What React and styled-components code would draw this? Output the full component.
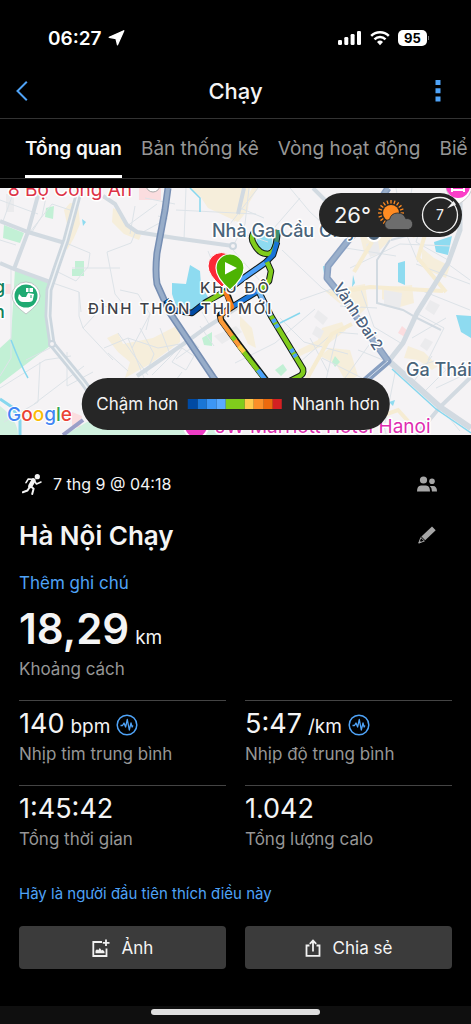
import React, { useState } from "react";
import styled, { createGlobalStyle } from "styled-components";

const tabs = ["Tổng quan", "Bản thống kê", "Vòng hoạt động", "Biể"];

const metrics = [
  { value: "140", unit: "bpm", label: "Nhịp tim trung bình", chart: true },
  { value: "5:47", unit: "/km", label: "Nhịp độ trung bình", chart: true },
  { value: "1:45:42", label: "Tổng thời gian" },
  { value: "1.042", label: "Tổng lượng calo" },
];

const paceColors = [
  { color: "#004aa3", size: 1 },
  { color: "#1a76d6", size: 1 },
  { color: "#3c96f5", size: 1 },
  { color: "#5aaaff", size: 1 },
  { color: "#80cc1c", size: 2 },
  { color: "#ffca4c", size: 1 },
  { color: "#fb8f28", size: 1 },
  { color: "#ec690d", size: 1 },
  { color: "#d42022", size: 1 },
];

function StatusIcons() {
  return (
    <StatusGroup>
      <svg width="24" height="16" viewBox="0 0 24 16" fill="#fff">
        <rect x="0" y="10" width="4" height="5" rx="1.3" />
        <rect x="6.3" y="7" width="4" height="8" rx="1.3" />
        <rect x="12.6" y="4" width="4" height="11" rx="1.3" />
        <rect x="19" y="1" width="4" height="14" rx="1.3" />
      </svg>
      <svg width="20" height="16" viewBox="0 0 20 16" fill="none" stroke="#fff" strokeWidth="2.5">
        <path d="M1.2 5.8a12.6 12.6 0 0 1 17.6 0" />
        <path d="M4.5 9.3a7.8 7.8 0 0 1 11 0" />
        <path d="M10 15.2l-3-3.2a4.3 4.3 0 0 1 6 0z" fill="#fff" stroke="none" />
      </svg>
      <Battery>95</Battery>
    </StatusGroup>
  );
}

function MapDrawing() {
  return (
    <MapSvg viewBox="0 0 471 247" preserveAspectRatio="xMidYMid slice">
      <rect width="471" height="247" fill="#f5f3f5" />

      {/* built-up blocks */}
      <g fill="#f6eedb">
        <path d="M190 0h60l-2 22-10 12-13-6-17-8-8-12z" />
        <path d="M70 15l8 1 2 20-6 14-7 12-4-10 4-16-3-14z" />
        <path d="M113 20l8 4 8 15 12 8-2 5-15-6-12-12z" />
        <path d="M107 150l11-5 5 11 30-6 27-14v18l-30 22-25 14 5-16-12-10z" />
        <path d="M252 0h6l-12 20-12 14-2-6 12-12zM360 48l26-14 8 14-20 20-10-4zM405 36l20-8 12 4-6 12-18 6z" />
        <path d="M325 103l40-7 3 22-10 10-20-14zM382 100l30-3 2 18-14 4-18-8z" />
        <path d="M322 140l20-6 4 8-18 14-24 10-14 8 8-12 20-10zM422 60l12 10 16 8-4 12-14-6-10-12z" />
        <path d="M330 160l20 2 8 26-12 6-10-18-16-8zM408 158l16 6 14 14-6 4-14-10-14-2zM240 128l12 12 4 20-8-4-8-18z" />
      </g>
      <g fill="#ebebed">
        <path d="M6 6h8v18h-8zM318 122l10 8-5 7-9-8zM316 138l8 5-4 8-8-5zM384 102l18 3-2 17-16-4zM430 112l10 5-6 10-9-6zM425 150l8 4-6 9-7-5zM366 56l12-3 2 12-10 4zM214 148l22-10 6 6-20 12z" />
      </g>
      <g fill="#fbdddf">
        <path d="M139 0h22v12h-22zM402 138l6 5-3 6-7-4zM72 224l10 4-2 12-8-2zM5 96h6v10H5z" />
      </g>
      <g fill="#c2f0d5">
        <path d="M15 81l35 13-4 24 4 40-50 38v-36l11-10z" />
        <path d="M4 37l20 8-4 10-17-5zM46 20l8-2-1 13-8-2zM75 73h9v15H72v-7h3z" />
        <path d="M202 150l10-6v14l-8-1zM275 182l8-6 4 6-6 6zM335 168l5 6-5 5-3-5z" />
        <path d="M0 218q18 14 18 29H0zM65 247l22-13 130-6 4 19z" opacity="0.7" />
      </g>
      <g fill="#8edbf0">
        <path d="M172 95l14 1 4-19 10 6 1 14 7 12-14 14-18-5-4-12z" />
        <path d="M82 31l4 3-3 4zM434 54l18-6-4 19-12-3zM398 75l7-2v24l-7-3zM456 127l15 1v22l-10-6zM353 87l2 8-3 4z" />
        <path d="M257 48l14-6 2 16-9 8-8-9zM389 214l6-2-2 6z" />
      </g>

      {/* side streets */}
      <g fill="none" stroke="#dde3e8" strokeWidth="1">
        <path d="M0 12l38 14M15 0L2 36M48 0l-6 28-10 16M0 52l16 5M30 44l22-28 24 8M66 55l24 10-2 14-12 14-24-12" />
        <path d="M50 94l29 10v24l4 12 30 32M79 104l2 20M72 80h48M107 64l8 42 8 10M107 64l24-9 4-10" />
        <path d="M176 22l80 4M143 44l22-12M135 18l-5 28M145 10l30 6M186 0l-2 52M158 28l10 3M127 38l30-22" />
        <path d="M120 102l18 4 12 20-4 16M83 140l20-22 22 4M104 160l24-10 30 10 22-4M140 140l14 26-8 20M128 150l16 40M108 165l20 18M118 145l30 42M160 140l10 26M150 126l-18 34" />
        <path d="M0 200l45-28 26-4M40 174l-2 40-34 20M67 164v34l26-14M34 216l50-38M11 80v90l-11 18M50 160l-24 12" />
        <path d="M172 174l14 8 8-14-12-8zM176 171l14-10M182 184l-12 16M182 157l-30 30M194 160l22 28M200 138l14 20M187 146l12 14M210 138l-8-14" />
        <path d="M208 63l8 20M233 58l12-22 4-36M238 44l30 10M233 62l28 32M290 0l20 24 22 20M300 10l-26 30M282 62l40 38 10 6M300 112l40-14M280 130l24 24 44 12M235 175l40-20 40-34" />
        <path d="M258 0l-28 36M240 20l24 10M346 60l50 8M350 80l50-24 50 2M396 0l6 36 16 38M412 0l-8 44M430 8l-14 46 32 18M404 44l50-6M416 76l54 20M420 102l50 20" />
        <path d="M340 118l37 2M360 99l14 40 30 18M310 150l18 34M300 174l34-30 24 2M324 200l14-58M345 190l32-44M322 170l60 30M418 126l26 14-16 32M412 150l34-20M448 76l22 16M400 185l34-12 20 14" />
        <path d="M388 174l-30-12M412 196l20-28M424 204l24-24M440 219l20 24M376 204l10 42M350 212l10 30M396 180l-12 60M420 240l20-22M436 200l30-14" />
      </g>

      <g fill="none" stroke="#f6ecd2" strokeWidth="4">
        <path d="M330 106l40-7 73 4M304 196l28-50 20-10M354 84l18-30M430 30l-12 40 28 34M370 232l28-10 18 20M340 200l20 26" />
      </g>

      {/* main roads */}
      <g fill="none" stroke="#d2dae1" strokeWidth="4">
        <path d="M0 33l28 11 37 11M40 0l-12 44-14 37M0 75l14 6 36 13" />
        <path d="M103 8l12 8 12 21 10 7 38 6 58 8" />
        <path d="M137 188l45-31 25-18 33-21" />
        <path d="M460 0v42l-12 33-31 50-14 30-15 19" strokeWidth="5" />
        <path d="M390 174l50 45 31 21" strokeWidth="6" />
        <path d="M471 189l-31 30-23 28M313 0l18 18M244 0l-6 26" />
        <path d="M390 52l-13 20v43l26 7 14 8 24 12" strokeWidth="2" />
        <path d="M461 40l-40 4-30 8" strokeWidth="2" />
      </g>
      <path d="M80 0L66 52l-9 26-8 24-1 26 4 28 31 38 20 28" fill="none" stroke="#ccd6de" strokeWidth="7" />
      <path d="M80 0L66 52l-9 26-8 24-1 26 4 28 31 38 20 28" fill="none" stroke="#f0f3f5" strokeWidth="1.5" />
      <circle cx="233" cy="58" r="3" fill="#f5f3f5" stroke="#ccd6de" strokeWidth="2" />
      <circle cx="52" cy="156" r="3" fill="#f5f3f5" stroke="#ccd6de" strokeWidth="2" />
      <g fill="none" stroke="#87d7ee" strokeWidth="1.5">
        <path d="M11 152q10 26 17 38M190 0l10 10v14M280 135l20-10M324 78q-1 12 12 24M392 181l44 40 35 24" />
        <path d="M0 211l12 8 8 14v14" strokeWidth="3" />
      </g>

      {/* ring roads */}
      <g fill="none" strokeLinejoin="round">
        <path d="M168 0l-3 22-8 43q-2 18 0 31l13 29 43 64 30 40" stroke="#768eb3" strokeWidth="7" />
        <path d="M168 0l-3 22-8 43q-2 18 0 31l13 29 43 64 30 40" stroke="#98adc9" strokeWidth="4" />
        <path d="M388 0l-16 24-25 30-19 24-1 12 13 16 48 67-22 19-26 23" stroke="#889fc1" strokeWidth="7" />
        <path d="M388 0l-16 24-25 30-19 24-1 12 13 16 48 67" stroke="#9aafcb" strokeWidth="4" />
        <path d="M388 173l-22 19-26 23" stroke="#d5dfeb" strokeWidth="1" />
        <path d="M83 232l-20 15" stroke="#9a9fc8" strokeWidth="4" />
      </g>

      {/* recorded track */}
      <g fill="none" stroke="#121a18" strokeWidth="6.5" strokeLinejoin="round">
        <path d="M254 44q-4 6 0 12 5 10 14 10 6-1 8-10l2-14" />
        <path d="M277 54l-4 13-8 8-20 14-17 13" />
        <path d="M267 74l4 9-2 10-11 10-26 16" />
        <path d="M258 102l13 26 32 53q1 5-3 7l-10 5" />
        <path d="M166 112l6 10 20 3 14-11 20-11 6 16-12 8 1 5 19 26 26 34" />
      </g>
      <g fill="none" strokeWidth="4.5" strokeLinejoin="round">
        <path d="M254 44q-4 6 0 12 5 10 14 10 6-1 8-10" stroke="#80cc1c" />
        <path d="M276 56l2-14" stroke="#3e8f70" />
        <path d="M277 54l-4 13-8 8" stroke="#1874d8" />
        <path d="M265 75l-20 14-17 13" stroke="#4ba0fa" />
        <path d="M267 74l4 9-2 10-8 8" stroke="#80cc1c" />
        <path d="M261 101l-29 18" stroke="#1c78db" />
        <path d="M258 102l13 26" stroke="#75b8f5" />
        <path d="M271 128l32 53q1 5-3 7l-10 5" stroke="#80cc1c" />
        <path d="M273 131l5 9M291 161l5 8" stroke="#4ba0fa" strokeDasharray="4 2" />
        <path d="M166 112l6 10 20 3 10-8" stroke="#004aa3" />
        <path d="M202 117l23-14" stroke="#80cc1c" />
        <path d="M225 103l7 16-11 8" stroke="#f57b1c" />
        <path d="M220 128l1 5 19 26" stroke="#fb9a38" />
        <path d="M232 148l3 4M240 159l26 34" stroke="#80cc1c" />
        <path d="M239 158l5 6" stroke="#ffca4c" />
        <path d="M258 182l9 12" stroke="#4ba0fa" />
      </g>

      <g stroke="#fff" strokeWidth="3" paintOrder="stroke" strokeLinejoin="round">
        <MapLabel x="8" y="8" $size={19} fill="#dd3347">8 Bộ Công An</MapLabel>
        <MapLabel x="212" y="49" $size={18} $weight={500} fill="#49647a">Nhà Ga Cầu Giấy</MapLabel>
        <MapLabel x="406" y="188" $size={18} $weight={500} fill="#49647a">Ga Thái</MapLabel>
        <MapLabel x="215" y="245" $size={19} fill="#df2db1">JW Marriott Hotel Hanoi</MapLabel>
        <MapLabel x="-6" y="105" $size={18} $weight={500} fill="#12805a">g</MapLabel>
        <MapLabel x="-6" y="130" $size={18} $weight={500} fill="#12805a">n</MapLabel>
        <MapLabel x="88" y="126" $size={15} $weight={500} $area fill="#3e4248">ĐÌNH THÔN</MapLabel>
        <MapLabel x="200" y="105" $size={15} $weight={500} $area fill="#3e4248">KHU ĐÔ</MapLabel>
        <MapLabel x="201" y="126" $size={15} $weight={500} $area fill="#3e4248">THỊ MỚI</MapLabel>
        <MapLabel x="333" y="99" $size={15} $weight={500} fill="#4b5f7c" transform="rotate(57 333 99)">
          Vành Đai 2
        </MapLabel>
      </g>

      {/* places */}
      <path d="M26 126q-14-10-14-18a14 14 0 1 1 28 0q0 8-14 18z" fill="#fff" stroke="#b5b9bb" strokeWidth="0.8" />
      <circle cx="26" cy="108" r="11.5" fill="#1faa72" />
      <path d="M19 106l3 3h4l2-4 6 1-1 5q0 3-4 3h-6q-4 0-5-4zM26 100h7v4h-7z" fill="#fff" />
      <path d="M29 100v4M31 107v3" stroke="#1faa72" strokeWidth="1" />
      <circle cx="153" cy="-3" r="7" fill="#fff" stroke="#aaa" />
      <circle cx="374" cy="46" r="7" fill="#4b6279" stroke="#fff" strokeWidth="2" />
      <path d="M459 16q-13-8-13-18h26q0 10-13 18z" fill="#fff" stroke="#c9c9cc" />
      <circle cx="458" cy="-2" r="12" fill="#fb3fc8" />
      <path d="M452 0v4M464 0v4M452 2h12" stroke="#fff" strokeWidth="2" />
      <circle cx="196" cy="238" r="12" fill="#ee3dc5" stroke="#fff" strokeWidth="2" />

      {/* finish and start pins */}
      <path d="M222 99q-14-12-14-21a13.5 13.5 0 1 1 27 0q0 9-13 21z" fill="#fc2936" stroke="#fff" strokeWidth="1" />
      <path d="M230 102q-14-12-14-22a14 14 0 1 1 28 0q0 10-14 22z" fill="#4db302" stroke="#fff" strokeWidth="1.2" />
      <path d="M225 74l12 6-12 6.5z" fill="#fff" />

      <GoogleMark x="7" y="233">
        <tspan fill="#4285f4">G</tspan>
        <tspan fill="#ea4335">o</tspan>
        <tspan fill="#fbbc05">o</tspan>
        <tspan fill="#4285f4">g</tspan>
        <tspan fill="#34a853">l</tspan>
        <tspan fill="#ea4335">e</tspan>
      </GoogleMark>
    </MapSvg>
  );
}

function WeatherIcon() {
  const rays = Array.from({ length: 20 }, (_, i) => i * 18);
  return (
    <svg width="38" height="32" viewBox="0 0 38 32">
      <g stroke="#ff8b22" strokeWidth="1.3">
        {rays.map((angle) => (
          <path key={angle} d="M14 4.5V1" transform={`rotate(${angle} 14 14)`} />
        ))}
      </g>
      <circle cx="14" cy="14" r="8" fill="#ff8b22" />
      <path
        d="M13 30.5a5 5 0 0 1-.5-10 8.5 8.5 0 0 1 16.300-.8 5.5 5.5 0 0 1 2.7 10.8z"
        fill="#6d6d6d"
        stroke="#262626"
        strokeWidth="0.8"
      />
    </svg>
  );
}

function WindDial() {
  return (
    <svg width="38" height="38" viewBox="0 0 38 38">
      <circle cx="19" cy="19" r="17.5" fill="none" stroke="#f2f2f2" strokeWidth="1.3" />
      <path d="M26 12.5l6.500-7.500 2.500 3.500z" fill="#f2f2f2" />
      <DialText x="19" y="24" textAnchor="middle">7</DialText>
    </svg>
  );
}

function RunnerIcon() {
  return (
    <svg width="20" height="21" viewBox="0 0 20 21" fill="none" stroke="#f4f4f4" strokeLinejoin="round">
      <circle cx="15.3" cy="2.7" r="2.6" fill="#f4f4f4" stroke="none" />
      <path d="M11.5 6.3L8.3 12" strokeWidth="4.4" strokeLinecap="round" />
      <path d="M10.5 5.3L6.3 5 4 8.7" strokeWidth="1.6" strokeLinecap="round" />
      <path d="M12.5 7l2 3 4.5-2" strokeWidth="1.6" strokeLinecap="round" />
      <path d="M8 12.5l-2.5 4L.8 18.3" strokeWidth="2" strokeLinecap="round" />
      <path d="M9 12.5l2.6 2.3-1.4 5.2" strokeWidth="2" strokeLinecap="round" />
    </svg>
  );
}

function ChartIcon() {
  return (
    <svg width="22" height="22" viewBox="0 0 22 22" fill="none" stroke="#4fa3f7" strokeLinejoin="round">
      <circle cx="11" cy="11" r="9.8" strokeWidth="1.5" />
      <path d="M4.500 11.500h2l1.500-2.500 1.600 4 1.700-7.500 2 10.500 1.700-7 1.100 4 .900-1.500" strokeWidth="1.300" />
    </svg>
  );
}

function PhotoIcon() {
  return (
    <svg width="18" height="18" viewBox="0 0 18 18" fill="none" stroke="#f2f2f2" strokeWidth="1.8">
      <path d="M10 3H1.300v14h13.200V9.500" />
      <path d="M14 .5v6.500M10.800 3.800h6.700" />
      <path d="M3.500 14.200v-2.400l1.500-1.500 1.200 1L7.800 9l1.900 2.600 1.100-.8 1.700 2v1.400z" fill="#f2f2f2" stroke="none" />
    </svg>
  );
}

function ShareIcon() {
  return (
    <svg width="16" height="18" viewBox="0 0 16 18" fill="none" stroke="#f2f2f2" strokeWidth="1.8">
      <path d="M4.500 6.500H1.500v10.300h13V6.500h-3" />
      <path d="M8 12.500V1.800M4.800 4.800L8 1.600l3.200 3.200" />
    </svg>
  );
}

function App() {
  const [active, setActive] = useState(0);

  return (
    <Screen>
      <GlobalStyle />
      <StatusBar>
        <Clock>
          06:27
          <svg width="17" height="16" viewBox="0 0 17 16">
            <path d="M15.8 .8L9.500 14.800 8 8.500 1.200 7.300z" fill="#fff" stroke="#fff" strokeWidth="1.300" strokeLinejoin="round" />
          </svg>
        </Clock>
        <StatusIcons />
      </StatusBar>

      <Header>
        <IconButton aria-label="Quay lại">
          <svg width="12" height="20" viewBox="0 0 12 20" fill="none" stroke="#4fa3f7" strokeWidth="2">
            <path d="M10.8 .8L1.500 10l9.300 9.200" />
          </svg>
        </IconButton>
        <HeaderTitle>Chạy</HeaderTitle>
        <IconButton aria-label="Thêm" $centered>
          <svg width="6" height="22" viewBox="0 0 6 22" fill="#4fa3f7">
            <path d="M.5 0h5v5h-5zM.5 8.300h5v5h-5zM.5 16.600h5v5h-5z" />
          </svg>
        </IconButton>
      </Header>

      <Tabs role="tablist">
        {tabs.map((tab, i) => (
          <Tab key={tab} role="tab" aria-selected={active === i} $active={active === i} onClick={() => setActive(i)}>
            {tab}
          </Tab>
        ))}
      </Tabs>

      <MapWrapper>
        <MapDrawing />
        <WeatherPill>
          <span>26°</span>
          <WeatherIcon />
          <WindDial />
        </WeatherPill>
        <LegendPill>
          <span>Chậm hơn</span>
          <PaceScale>
            {paceColors.map((item) => (
              <PaceStep key={item.color} $color={item.color} $size={item.size} />
            ))}
          </PaceScale>
          <span>Nhanh hơn</span>
        </LegendPill>
      </MapWrapper>

      <Details>
        <Row>
          <DateText>
            <RunnerIcon />
            7 thg 9 @ 04:18
          </DateText>
          <RowButton aria-label="Quyền riêng tư">
            <svg width="20" height="16" viewBox="0 0 20 16" fill="#a6a6a6">
              <circle cx="6.5" cy="4" r="3.6" />
              <circle cx="15" cy="5.3" r="2.8" />
              <path d="M0 15.500q0-6 4-6h5q4 0 4 6zM12.800 10H16q4 0 4 5.500h-5q0-4-2.200-5.500z" />
            </svg>
          </RowButton>
        </Row>
        <Row>
          <Title>Hà Nội Chạy</Title>
          <RowButton aria-label="Sửa tên">
            <svg width="18" height="18" viewBox="0 0 18 18" fill="#a6a6a6">
              <path d="M14 .5l3.700 3.700L7.200 14.200 3.400 10.600z" />
              <path d="M2.800 11.500L.8 17l5.600-2z" fill="none" stroke="#a6a6a6" strokeWidth="1" />
              <path d="M.5 17.500l1-3 2 2z" />
            </svg>
          </RowButton>
        </Row>
        <NoteLink href="#note">Thêm ghi chú</NoteLink>
        <Distance>
          18,29
          <Unit>km</Unit>
        </Distance>
        <Label>Khoảng cách</Label>

        <Grid>
          {metrics.map((item) => (
            <Metric key={item.label}>
              <Value>
                {item.value}
                {item.unit && <Unit>{item.unit}</Unit>}
                {item.chart && (
                  <ChartSlot>
                    <ChartIcon />
                  </ChartSlot>
                )}
              </Value>
              <Label>{item.label}</Label>
            </Metric>
          ))}
        </Grid>

        <LikeLink href="#like">Hãy là người đầu tiên thích điều này</LikeLink>
        <Actions>
          <ActionButton>
            <PhotoIcon />
            Ảnh
          </ActionButton>
          <ActionButton>
            <ShareIcon />
            Chia sẻ
          </ActionButton>
        </Actions>
      </Details>

      <HomeBar>
        <HomeIndicator />
      </HomeBar>
    </Screen>
  );
}

export default App;

const GlobalStyle = createGlobalStyle`
  * {
    box-sizing: border-box;
  }
  body {
    margin: 0;
    background: #000;
  }
  button {
    font: inherit;
    color: inherit;
    background: none;
    border: none;
    padding: 0;
    cursor: pointer;
  }
  svg {
    display: block;
    flex-shrink: 0;
  }
`;

const Screen = styled.div`
  display: flex;
  flex-direction: column;
  min-height: 100vh;
  background: #000;
  color: #f4f4f4;
  font-family: Inter, "Liberation Sans", sans-serif;
`;

const StatusBar = styled.div`
  display: flex;
  align-items: center;
  justify-content: space-between;
  padding: 26px 44px 0 48px;
  height: 50px;
`;

const Clock = styled.div`
  display: flex;
  align-items: center;
  gap: 6px;
  font-size: 19px;
  font-weight: 600;
  color: #fff;
`;

const StatusGroup = styled.div`
  display: flex;
  align-items: center;
  gap: 8px;
`;

const Battery = styled.span`
  position: relative;
  width: 29px;
  height: 16px;
  border-radius: 5px;
  background: #fff;
  color: #000;
  font-size: 13px;
  font-weight: 700;
  line-height: 16px;
  text-align: center;

  &::after {
    content: "";
    position: absolute;
    top: 6px;
    right: -2px;
    width: 1px;
    height: 4px;
    background: #777;
  }
`;

const Header = styled.header`
  display: flex;
  align-items: center;
  justify-content: space-between;
  height: 69px;
  padding: 13px 16px 0;
  border-bottom: 1px solid #333;
`;

const IconButton = styled.button`
  display: flex;
  align-items: center;
  justify-content: ${({ $centered }) => ($centered ? "center" : "flex-start")};
  width: 34px;
  height: 32px;
`;

const HeaderTitle = styled.h1`
  margin: 0;
  font-size: 22px;
  font-weight: 500;
`;

const Tabs = styled.div`
  display: flex;
  gap: 19px;
  height: 60px;
  padding: 0 25px;
  margin-bottom: 9px;
  overflow: hidden;
  border-bottom: 1px solid #2c2c2c;
`;

const Tab = styled.button`
  flex-shrink: 0;
  padding-top: 3px;
  font-size: 19px;
  font-weight: ${({ $active }) => ($active ? 600 : 400)};
  color: ${({ $active }) => ($active ? "#f8f8f8" : "#969696")};
  border-bottom: 3px solid ${({ $active }) => ($active ? "#fff" : "transparent")};
`;

const MapWrapper = styled.section`
  position: relative;
  height: 247px;
  overflow: hidden;
`;

const MapSvg = styled.svg`
  width: 100%;
  height: 100%;
`;

const MapLabel = styled.text`
  font-size: ${({ $size }) => $size}px;
  font-weight: ${({ $weight }) => $weight || 400};
  letter-spacing: ${({ $area }) => ($area ? "2px" : "normal")};
`;

const GoogleMark = styled.text`
  font-size: 19px;
  font-weight: 500;
  stroke: #fff;
  stroke-width: 2px;
  paint-order: stroke;
`;

const DialText = styled.text`
  font-size: 14px;
  fill: #f2f2f2;
`;

const WeatherPill = styled.div`
  position: absolute;
  top: 5px;
  right: 9px;
  display: flex;
  align-items: center;
  gap: 6px;
  height: 44px;
  padding: 0 3px 0 15px;
  border-radius: 22px;
  background: #262626;
  font-size: 22px;
`;

const LegendPill = styled.div`
  position: absolute;
  bottom: 5px;
  left: 50%;
  transform: translateX(-50%);
  display: flex;
  align-items: center;
  gap: 10px;
  height: 52px;
  padding: 0 10px 0 15px;
  border-radius: 26px;
  background: #262626;
  font-size: 17px;
  white-space: nowrap;
`;

const PaceScale = styled.div`
  display: flex;
  width: 94px;
  height: 10px;
`;

const PaceStep = styled.div`
  flex: ${({ $size }) => $size};
  background: ${({ $color }) => $color};
`;

const Details = styled.main`
  display: flex;
  flex-direction: column;
  padding: 29px 19px 0;
`;

const Row = styled.div`
  display: flex;
  align-items: center;
  justify-content: space-between;
  height: 40px;
  margin-bottom: 11px;
`;

const DateText = styled.div`
  display: flex;
  align-items: center;
  gap: 11px;
  padding-left: 3px;
  font-size: 16px;
`;

const RowButton = styled.button`
  display: flex;
  align-items: center;
  justify-content: center;
  width: 50px;
  height: 40px;
`;

const Title = styled.h2`
  margin: 0;
  font-size: 26px;
  font-weight: 600;
`;

const NoteLink = styled.a`
  align-self: flex-start;
  margin-top: 5px;
  font-size: 17px;
  line-height: 24px;
  color: #4fa3f7;
  text-decoration: none;
`;

const Distance = styled.div`
  display: flex;
  align-items: baseline;
  gap: 6px;
  height: 48px;
  margin: 10px 0 4px;
  font-size: 42px;
  font-weight: 600;
  line-height: 48px;
`;

const Unit = styled.span`
  font-size: 19px;
  font-weight: 400;
`;

const Label = styled.div`
  font-size: 17px;
  line-height: 24px;
  color: #969696;
`;

const Grid = styled.div`
  display: grid;
  grid-template-columns: 1fr 1fr;
  column-gap: 19px;
  margin-top: 19px;
`;

const Metric = styled.div`
  border-top: 1px solid #444;
  padding: 7px 0 19px;
`;

const Value = styled.div`
  display: flex;
  align-items: baseline;
  gap: 6px;
  height: 34px;
  font-size: 27px;
  line-height: 32px;
`;

const ChartSlot = styled.span`
  align-self: center;
`;

const LikeLink = styled.a`
  align-self: flex-start;
  margin-top: 12px;
  font-size: 15px;
  line-height: 24px;
  color: #4fa3f7;
  text-decoration: none;
`;

const Actions = styled.div`
  display: grid;
  grid-template-columns: 1fr 1fr;
  gap: 19px;
  margin-top: 20px;
`;

const ActionButton = styled.button`
  display: flex;
  align-items: center;
  justify-content: center;
  gap: 12px;
  height: 43px;
  border-radius: 4px;
  background: #3b3b3b;
  font-size: 17px;
`;

const HomeBar = styled.footer`
  display: flex;
  justify-content: center;
  height: 18px;
  margin-top: auto;
  padding-top: 3px;
  background: #0f0f0f;
`;

const HomeIndicator = styled.div`
  width: 36%;
  height: 6px;
  border-radius: 3px;
  background: #dedede;
`;
